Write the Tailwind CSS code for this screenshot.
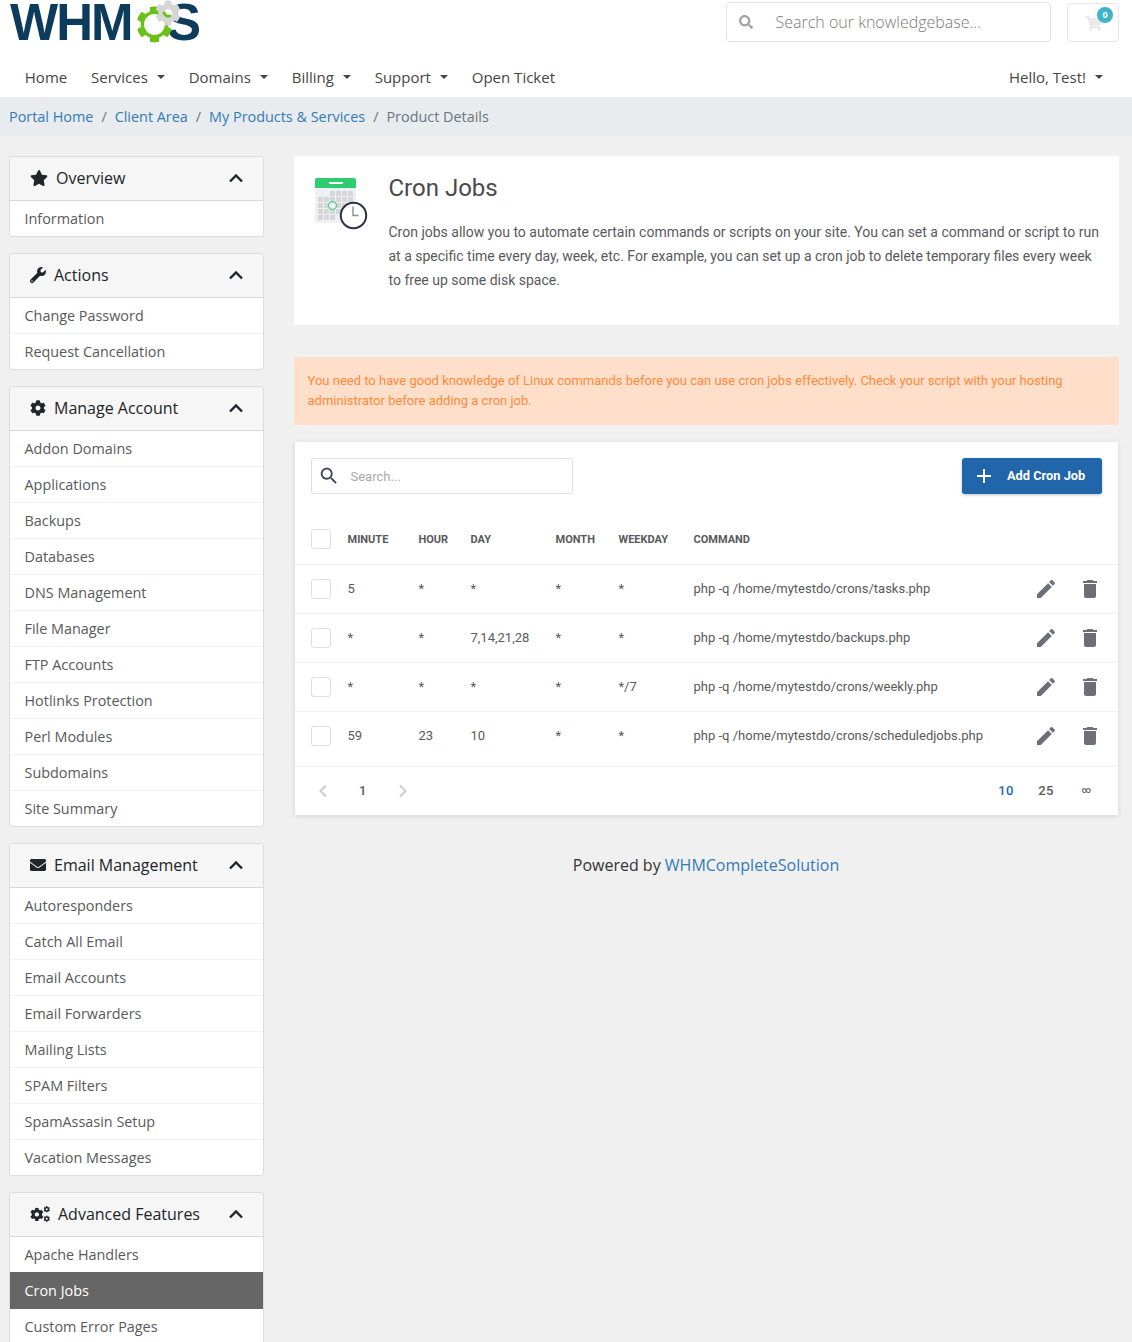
<!DOCTYPE html>
<html lang="en">
<head>
    <meta charset="UTF-8">
    <meta name="viewport" content="width=device-width, initial-scale=1.0">
    <title>Cron Jobs</title>
    <script src="https://cdn.jsdelivr.net/npm/@tailwindcss/browser@4"></script>
</head>
<body class="bg-[#f0f0f0] font-['Open_Sans',sans-serif] text-[#333]">
<div class="h-[1342px] overflow-hidden">
    <!-- Header -->
    <header class="bg-white h-[97px]">
        <div class="flex h-[59px] pl-[10px] pr-[13px]">
            <div class="relative flex items-start h-[45px] w-[200px] font-['Liberation_Sans',sans-serif] font-bold text-[#0c3b5c] text-[51px] leading-[46px] tracking-[-2px]">
                <span>WHM</span>
                <span class="absolute left-[157px] top-0">S</span>
                <svg class="absolute left-[126px] top-[6px] w-[37px] h-[37px] text-[#6cc01a]" viewBox="0 0 512 512" fill="currentColor"><circle cx="256" cy="256" r="150" fill="#fff"/><path d="M487.4 315.7l-42.6-24.6c4.3-23.2 4.3-47 0-70.2l42.6-24.6c4.9-2.8 7.1-8.6 5.5-14-11.1-35.6-30-67.8-54.7-94.6-3.8-4.1-10-5.1-14.8-2.3L380.8 110c-17.9-15.4-38.5-27.3-60.8-35.1V25.8c0-5.6-3.9-10.5-9.4-11.7-36.7-8.2-74.3-7.8-109.2 0-5.5 1.2-9.4 6.1-9.4 11.7V75c-22.2 7.9-42.8 19.8-60.8 35.1L88.7 85.5c-4.9-2.8-11-1.9-14.8 2.3-24.7 26.7-43.6 58.9-54.7 94.6-1.7 5.4.6 11.2 5.5 14L67.3 221c-4.3 23.2-4.3 47 0 70.2l-42.6 24.6c-4.9 2.8-7.1 8.6-5.5 14 11.1 35.6 30 67.8 54.7 94.6 3.8 4.1 10 5.1 14.8 2.3l42.6-24.6c17.9 15.4 38.5 27.3 60.8 35.1v49.2c0 5.6 3.9 10.5 9.4 11.7 36.7 8.2 74.3 7.8 109.2 0 5.5-1.2 9.4-6.1 9.4-11.7v-49.2c22.2-7.9 42.8-19.8 60.8-35.1l42.6 24.6c4.9 2.8 11 1.9 14.8-2.3 24.7-26.7 43.6-58.9 54.7-94.6 1.5-5.5-.7-11.3-5.6-14.1zM256 400c-79.5 0-144-64.5-144-144s64.5-144 144-144 144 64.5 144 144-64.5 144-144 144z"/></svg>
                <svg class="absolute left-[145px] top-0 w-[26px] h-[26px] text-[#d6d6d6]" viewBox="0 0 512 512" fill="currentColor"><circle cx="256" cy="256" r="110" fill="#fff"/><path d="M487.4 315.7l-42.6-24.6c4.3-23.2 4.3-47 0-70.2l42.6-24.6c4.9-2.8 7.1-8.6 5.5-14-11.1-35.6-30-67.8-54.7-94.6-3.8-4.1-10-5.1-14.8-2.3L380.8 110c-17.9-15.4-38.5-27.3-60.8-35.1V25.8c0-5.6-3.9-10.5-9.4-11.7-36.7-8.2-74.3-7.8-109.2 0-5.5 1.2-9.4 6.1-9.4 11.7V75c-22.2 7.9-42.8 19.8-60.8 35.1L88.7 85.5c-4.9-2.8-11-1.9-14.8 2.3-24.7 26.7-43.6 58.9-54.7 94.6-1.7 5.4.6 11.2 5.5 14L67.3 221c-4.3 23.2-4.3 47 0 70.2l-42.6 24.6c-4.9 2.8-7.1 8.6-5.5 14 11.1 35.6 30 67.8 54.7 94.6 3.8 4.1 10 5.1 14.8 2.3l42.6-24.6c17.9 15.4 38.5 27.3 60.8 35.1v49.2c0 5.6 3.9 10.5 9.4 11.7 36.7 8.2 74.3 7.8 109.2 0 5.5-1.2 9.4-6.1 9.4-11.7v-49.2c22.2-7.9 42.8-19.8 60.8-35.1l42.6 24.6c4.9 2.8 11 1.9 14.8-2.3 24.7-26.7 43.6-58.9 54.7-94.6 1.5-5.5-.7-11.3-5.6-14.1zM256 336c-44.1 0-80-35.9-80-80s35.9-80 80-80 80 35.9 80 80-35.9 80-80 80z"/><path d="M180 230a80 80 0 0 0 130 70" fill="none" stroke="#6cc01a" stroke-width="55"/></svg>
            </div>
            <div class="ml-auto flex items-start gap-4 pt-[2px]">
                <div class="flex items-center w-[325px] h-[40px] border border-[#e2e3e4] rounded-[4px] pl-[12px]">
                    <svg class="w-[14px] h-[14px] text-[#a3a3a3]" viewBox="0 0 512 512" fill="currentColor"><path d="M505 442.7L405.3 343c-4.5-4.5-10.6-7-17-7H372c27.6-35.3 44-79.7 44-128C416 93.1 322.9 0 208 0S0 93.1 0 208s93.1 208 208 208c48.3 0 92.7-16.4 128-44v16.3c0 6.4 2.5 12.5 7 17l99.7 99.7c9.4 9.4 24.6 9.4 33.9 0l28.3-28.3c9.4-9.4 9.4-24.6.1-34zM208 336c-70.7 0-128-57.2-128-128 0-70.7 57.2-128 128-128 70.7 0 128 57.2 128 128 0 70.7-57.2 128-128 128z"/></svg>
                    <span class="ml-[22.5px] text-[16px] font-light text-[#7a7a7a]">Search our knowledgebase...</span>
                </div>
                <div class="relative mt-[1px] w-[52px] h-[39px] border border-[#e6e6e6] rounded-[4px]">
                    <svg class="absolute left-[17px] top-[12px] w-[17px] h-[15px] text-[#e9e9e9]" viewBox="0 0 576 512" fill="currentColor"><path d="M528.12 301.319l47.273-208C578.806 78.301 567.391 64 551.99 64H159.208l-9.166-44.81C147.758 8.021 137.93 0 126.529 0H24C10.745 0 0 10.745 0 24v16c0 13.255 10.745 24 24 24h69.883l70.248 343.435C147.325 417.1 136 435.222 136 456c0 30.928 25.072 56 56 56s56-25.072 56-56c0-15.674-6.447-29.835-16.824-40h209.647C430.447 426.165 424 440.326 424 456c0 30.928 25.072 56 56 56s56-25.072 56-56c0-22.172-12.888-41.332-31.579-50.405l5.517-24.276c3.413-15.018-8.002-29.319-23.403-29.319H218.117l-6.545-32h293.145c11.206 0 20.92-7.754 23.403-18.681z"/></svg>
                    <span class="absolute left-[29px] top-[3px] w-4 h-4 rounded-full bg-[#3fb4c9] text-white text-[9px] font-bold leading-4 text-center">0</span>
                </div>
            </div>
        </div>
        <nav class="flex items-center h-[38px] pb-[2px] pl-[24.8px] pr-[29px] text-[15px] text-[#454545]">
            <a class="mr-[23.8px]">Home</a>
            <a class="mr-[23.8px] flex items-center">Services<i class="ml-[9px] border-t-[4px] border-x-[4px] border-x-transparent border-t-[#454545]"></i></a>
            <a class="mr-[23.8px] flex items-center">Domains<i class="ml-[9px] border-t-[4px] border-x-[4px] border-x-transparent border-t-[#454545]"></i></a>
            <a class="mr-[23.8px] flex items-center">Billing<i class="ml-[9px] border-t-[4px] border-x-[4px] border-x-transparent border-t-[#454545]"></i></a>
            <a class="mr-[23.8px] flex items-center">Support<i class="ml-[9px] border-t-[4px] border-x-[4px] border-x-transparent border-t-[#454545]"></i></a>
            <a>Open Ticket</a>
            <a class="ml-auto flex items-center">Hello, Test!<i class="ml-[9px] border-t-[4px] border-x-[4px] border-x-transparent border-t-[#454545]"></i></a>
        </nav>
    </header>

    <!-- Breadcrumb -->
    <div class="flex items-center gap-[8px] h-[39px] bg-[#e9ecef] pl-[9px] text-[14.4px] text-[#6c757d]">
        <a class="text-[#337ab7]">Portal Home</a><span>/</span>
        <a class="text-[#337ab7]">Client Area</a><span>/</span>
        <a class="text-[#337ab7]">My Products &amp; Services</a><span>/</span>
        <span>Product Details</span>
    </div>

    <div class="flex pt-[20px] pl-[9px]">
        <!-- Sidebar -->
        <aside class="w-[255px] shrink-0 flex flex-col gap-4 text-[14.4px] text-[#58595b]">
            <section class="bg-white border border-[#dcdcdc] rounded-[3px]">
                <h3 class="flex items-center h-[44px] pb-[2px] pl-[20px] pr-[19px] bg-[#f6f6f6] border-b border-[#d8d8d8] text-[16px] text-[#212529] rounded-t-[3px]">
                    <svg class="w-[18px] h-[16px] mr-[8px]" viewBox="0 0 576 512" fill="currentColor"><path d="M259.3 17.8L194 150.2 47.9 171.5c-26.2 3.8-36.7 36.1-17.7 54.6l105.7 103-25 145.5c-4.5 26.3 23.2 46 46.4 33.7L288 439.6l130.7 68.7c23.2 12.2 50.9-7.4 46.4-33.7l-25-145.5 105.7-103c19-18.5 8.5-50.8-17.7-54.6L382 150.2 316.7 17.8c-11.7-23.6-45.6-23.9-57.4 0z"/></svg>
                    Overview
                    <svg class="ml-auto w-[16px] h-[16px]" viewBox="0 0 16 16" fill="none" stroke="currentColor" stroke-width="2.4"><path d="M2 11.5l6-6 6 6"/></svg>
                </h3>
                <a class="flex items-center h-[35px] pl-[14.5px]">Information</a>
            </section>
            <section class="bg-white border border-[#dcdcdc] rounded-[3px]">
                <h3 class="flex items-center h-[44px] pb-[2px] pl-[20px] pr-[19px] bg-[#f6f6f6] border-b border-[#d8d8d8] text-[16px] text-[#212529] rounded-t-[3px]">
                    <svg class="w-[16px] h-[16px] mr-[8px]" viewBox="0 0 512 512" fill="currentColor"><path d="M507.73 109.1c-2.24-9.03-13.54-12.09-20.12-5.51l-74.36 74.36-67.88-11.31-11.31-67.88 74.36-74.36c6.62-6.62 3.43-17.9-5.66-20.16-47.38-11.74-99.55.91-136.58 37.93-39.64 39.64-50.55 97.1-34.05 147.2L18.74 402.76c-24.99 24.99-24.99 65.51 0 90.5 24.99 24.99 65.51 24.99 90.5 0l213.21-213.21c50.12 16.71 107.47 5.68 147.37-34.22 37.07-37.07 49.7-89.32 37.91-136.73zM64 472c-13.25 0-24-10.75-24-24 0-13.26 10.75-24 24-24s24 10.74 24 24c0 13.25-10.75 24-24 24z"/></svg>
                    Actions
                    <svg class="ml-auto w-[16px] h-[16px]" viewBox="0 0 16 16" fill="none" stroke="currentColor" stroke-width="2.4"><path d="M2 11.5l6-6 6 6"/></svg>
                </h3>
                <a class="flex items-center h-[36px] pl-[14.5px] border-b border-[#f2f2f2]">Change Password</a>
                <a class="flex items-center h-[35px] pl-[14.5px]">Request Cancellation</a>
            </section>
            <section class="bg-white border border-[#dcdcdc] rounded-[3px]">
                <h3 class="flex items-center h-[44px] pb-[2px] pl-[20px] pr-[19px] bg-[#f6f6f6] border-b border-[#d8d8d8] text-[16px] text-[#212529] rounded-t-[3px]">
                    <svg class="w-[16px] h-[16px] mr-[8px]" viewBox="0 0 512 512" fill="currentColor"><path d="M487.4 315.7l-42.6-24.6c4.3-23.2 4.3-47 0-70.2l42.6-24.6c4.9-2.8 7.1-8.6 5.5-14-11.1-35.6-30-67.8-54.7-94.6-3.8-4.1-10-5.1-14.8-2.3L380.8 110c-17.9-15.4-38.5-27.3-60.8-35.1V25.8c0-5.6-3.9-10.5-9.4-11.7-36.7-8.2-74.3-7.8-109.2 0-5.5 1.2-9.4 6.1-9.4 11.7V75c-22.2 7.9-42.8 19.8-60.8 35.1L88.7 85.5c-4.9-2.8-11-1.9-14.8 2.3-24.7 26.7-43.6 58.9-54.7 94.6-1.7 5.4.6 11.2 5.5 14L67.3 221c-4.3 23.2-4.3 47 0 70.2l-42.6 24.6c-4.9 2.8-7.1 8.6-5.5 14 11.1 35.6 30 67.8 54.7 94.6 3.8 4.1 10 5.1 14.8 2.3l42.6-24.6c17.9 15.4 38.5 27.3 60.8 35.1v49.2c0 5.6 3.9 10.5 9.4 11.7 36.7 8.2 74.3 7.8 109.2 0 5.5-1.2 9.4-6.1 9.4-11.7v-49.2c22.2-7.9 42.8-19.8 60.8-35.1l42.6 24.6c4.9 2.8 11 1.9 14.8-2.3 24.7-26.7 43.6-58.9 54.7-94.6 1.5-5.5-.7-11.3-5.6-14.1zM256 336c-44.1 0-80-35.9-80-80s35.9-80 80-80 80 35.9 80 80-35.9 80-80 80z"/></svg>
                    Manage Account
                    <svg class="ml-auto w-[16px] h-[16px]" viewBox="0 0 16 16" fill="none" stroke="currentColor" stroke-width="2.4"><path d="M2 11.5l6-6 6 6"/></svg>
                </h3>
                <a class="flex items-center h-[36px] pl-[14.5px] border-b border-[#f2f2f2]">Addon Domains</a>
                <a class="flex items-center h-[36px] pl-[14.5px] border-b border-[#f2f2f2]">Applications</a>
                <a class="flex items-center h-[36px] pl-[14.5px] border-b border-[#f2f2f2]">Backups</a>
                <a class="flex items-center h-[36px] pl-[14.5px] border-b border-[#f2f2f2]">Databases</a>
                <a class="flex items-center h-[36px] pl-[14.5px] border-b border-[#f2f2f2]">DNS Management</a>
                <a class="flex items-center h-[36px] pl-[14.5px] border-b border-[#f2f2f2]">File Manager</a>
                <a class="flex items-center h-[36px] pl-[14.5px] border-b border-[#f2f2f2]">FTP Accounts</a>
                <a class="flex items-center h-[36px] pl-[14.5px] border-b border-[#f2f2f2]">Hotlinks Protection</a>
                <a class="flex items-center h-[36px] pl-[14.5px] border-b border-[#f2f2f2]">Perl Modules</a>
                <a class="flex items-center h-[36px] pl-[14.5px] border-b border-[#f2f2f2]">Subdomains</a>
                <a class="flex items-center h-[35px] pl-[14.5px]">Site Summary</a>
            </section>
            <section class="bg-white border border-[#dcdcdc] rounded-[3px]">
                <h3 class="flex items-center h-[44px] pb-[2px] pl-[20px] pr-[19px] bg-[#f6f6f6] border-b border-[#d8d8d8] text-[16px] text-[#212529] rounded-t-[3px]">
                    <svg class="w-[16px] h-[16px] mr-[8px]" viewBox="0 0 512 512" fill="currentColor"><path d="M502.3 190.8c3.9-3.1 9.7-.2 9.7 4.7V400c0 26.5-21.5 48-48 48H48c-26.5 0-48-21.5-48-48V195.6c0-5 5.7-7.8 9.7-4.7 22.4 17.4 52.1 39.5 154.1 113.6 21.1 15.4 56.7 47.8 92.2 47.6 35.7.3 72-32.8 92.3-47.6 102-74.1 131.6-96.3 154-113.7zM256 320c23.2.4 56.6-29.2 73.4-41.4 132.7-96.3 142.8-104.7 173.4-128.7 5.8-4.5 9.2-11.5 9.2-18.9v-19c0-26.5-21.5-48-48-48H48C21.5 64 0 85.5 0 112v19c0 7.4 3.4 14.3 9.2 18.9 30.6 23.9 40.7 32.4 173.4 128.7 16.8 12.2 50.2 41.8 73.4 41.4z"/></svg>
                    Email Management
                    <svg class="ml-auto w-[16px] h-[16px]" viewBox="0 0 16 16" fill="none" stroke="currentColor" stroke-width="2.4"><path d="M2 11.5l6-6 6 6"/></svg>
                </h3>
                <a class="flex items-center h-[36px] pl-[14.5px] border-b border-[#f2f2f2]">Autoresponders</a>
                <a class="flex items-center h-[36px] pl-[14.5px] border-b border-[#f2f2f2]">Catch All Email</a>
                <a class="flex items-center h-[36px] pl-[14.5px] border-b border-[#f2f2f2]">Email Accounts</a>
                <a class="flex items-center h-[36px] pl-[14.5px] border-b border-[#f2f2f2]">Email Forwarders</a>
                <a class="flex items-center h-[36px] pl-[14.5px] border-b border-[#f2f2f2]">Mailing Lists</a>
                <a class="flex items-center h-[36px] pl-[14.5px] border-b border-[#f2f2f2]">SPAM Filters</a>
                <a class="flex items-center h-[36px] pl-[14.5px] border-b border-[#f2f2f2]">SpamAssasin Setup</a>
                <a class="flex items-center h-[35px] pl-[14.5px]">Vacation Messages</a>
            </section>
            <section class="bg-white border border-[#dcdcdc] rounded-[3px]">
                <h3 class="flex items-center h-[44px] pb-[2px] pl-[20px] pr-[19px] bg-[#f6f6f6] border-b border-[#d8d8d8] text-[16px] text-[#212529] rounded-t-[3px]">
                    <svg class="w-[20px] h-[16px] mr-[8px]" viewBox="0 0 640 512" fill="currentColor">
                        <svg x="0" y="50" width="440" height="440" viewBox="0 0 512 512"><path d="M487.4 315.7l-42.6-24.6c4.3-23.2 4.3-47 0-70.2l42.6-24.6c4.9-2.8 7.1-8.6 5.5-14-11.1-35.6-30-67.8-54.7-94.6-3.8-4.1-10-5.1-14.8-2.3L380.8 110c-17.9-15.4-38.5-27.3-60.8-35.1V25.8c0-5.6-3.9-10.5-9.4-11.7-36.7-8.2-74.3-7.8-109.2 0-5.5 1.2-9.4 6.1-9.4 11.7V75c-22.2 7.9-42.8 19.8-60.8 35.1L88.7 85.5c-4.9-2.8-11-1.9-14.8 2.3-24.7 26.7-43.6 58.9-54.7 94.6-1.7 5.4.6 11.2 5.5 14L67.3 221c-4.3 23.2-4.3 47 0 70.2l-42.6 24.6c-4.9 2.8-7.1 8.6-5.5 14 11.1 35.6 30 67.8 54.7 94.6 3.8 4.1 10 5.1 14.8 2.3l42.6-24.6c17.9 15.4 38.5 27.3 60.8 35.1v49.2c0 5.6 3.9 10.5 9.4 11.7 36.7 8.2 74.3 7.8 109.2 0 5.5-1.2 9.4-6.1 9.4-11.7v-49.2c22.2-7.9 42.8-19.8 60.8-35.1l42.6 24.6c4.9 2.8 11 1.9 14.8-2.3 24.7-26.7 43.6-58.9 54.7-94.6 1.5-5.5-.7-11.3-5.6-14.1zM256 336c-44.1 0-80-35.9-80-80s35.9-80 80-80 80 35.9 80 80-35.9 80-80 80z"/></svg>
                        <svg x="430" y="0" width="210" height="210" viewBox="0 0 512 512"><path d="M487.4 315.7l-42.6-24.6c4.3-23.2 4.3-47 0-70.2l42.6-24.6c4.9-2.8 7.1-8.6 5.5-14-11.1-35.6-30-67.8-54.7-94.6-3.8-4.1-10-5.1-14.8-2.3L380.8 110c-17.9-15.4-38.5-27.3-60.8-35.1V25.8c0-5.6-3.9-10.5-9.4-11.7-36.7-8.2-74.3-7.8-109.2 0-5.5 1.2-9.4 6.1-9.4 11.7V75c-22.2 7.9-42.8 19.8-60.8 35.1L88.7 85.5c-4.9-2.8-11-1.9-14.8 2.3-24.7 26.7-43.6 58.9-54.7 94.6-1.7 5.4.6 11.2 5.5 14L67.3 221c-4.3 23.2-4.3 47 0 70.2l-42.6 24.6c-4.9 2.8-7.1 8.6-5.5 14 11.1 35.6 30 67.8 54.7 94.6 3.8 4.1 10 5.1 14.8 2.3l42.6-24.6c17.9 15.4 38.5 27.3 60.8 35.1v49.2c0 5.6 3.9 10.5 9.4 11.7 36.7 8.2 74.3 7.8 109.2 0 5.5-1.2 9.4-6.1 9.4-11.7v-49.2c22.2-7.9 42.8-19.8 60.8-35.1l42.6 24.6c4.9 2.8 11 1.9 14.8-2.3 24.7-26.7 43.6-58.9 54.7-94.6 1.5-5.5-.7-11.3-5.6-14.1zM256 336c-44.1 0-80-35.9-80-80s35.9-80 80-80 80 35.9 80 80-35.9 80-80 80z"/></svg>
                        <svg x="430" y="302" width="210" height="210" viewBox="0 0 512 512"><path d="M487.4 315.7l-42.6-24.6c4.3-23.2 4.3-47 0-70.2l42.6-24.6c4.9-2.8 7.1-8.6 5.5-14-11.1-35.6-30-67.8-54.7-94.6-3.8-4.1-10-5.1-14.8-2.3L380.8 110c-17.9-15.4-38.5-27.3-60.8-35.1V25.8c0-5.6-3.9-10.5-9.4-11.7-36.7-8.2-74.3-7.8-109.2 0-5.5 1.2-9.4 6.1-9.4 11.7V75c-22.2 7.9-42.8 19.8-60.8 35.1L88.7 85.5c-4.9-2.8-11-1.9-14.8 2.3-24.7 26.7-43.6 58.9-54.7 94.6-1.7 5.4.6 11.2 5.5 14L67.3 221c-4.3 23.2-4.3 47 0 70.2l-42.6 24.6c-4.9 2.8-7.1 8.6-5.5 14 11.1 35.6 30 67.8 54.7 94.6 3.8 4.1 10 5.1 14.8 2.3l42.6-24.6c17.9 15.4 38.5 27.3 60.8 35.1v49.2c0 5.6 3.9 10.5 9.4 11.7 36.7 8.2 74.3 7.8 109.2 0 5.5-1.2 9.4-6.1 9.4-11.7v-49.2c22.2-7.9 42.8-19.8 60.8-35.1l42.6 24.6c4.9 2.8 11 1.9 14.8-2.3 24.7-26.7 43.6-58.9 54.7-94.6 1.5-5.5-.7-11.3-5.6-14.1zM256 336c-44.1 0-80-35.9-80-80s35.9-80 80-80 80 35.9 80 80-35.9 80-80 80z"/></svg>
                    </svg>
                    Advanced Features
                    <svg class="ml-auto w-[16px] h-[16px]" viewBox="0 0 16 16" fill="none" stroke="currentColor" stroke-width="2.4"><path d="M2 11.5l6-6 6 6"/></svg>
                </h3>
                <a class="flex items-center h-[35px] pl-[14.5px]">Apache Handlers</a>
                <a class="flex items-center h-[37px] pl-[14.5px] bg-[#666] text-white">Cron Jobs</a>
                <a class="flex items-center h-[36px] pl-[14.5px]">Custom Error Pages</a>
            </section>
        </aside>

        <!-- Main -->
        <main class="w-[825px] ml-[30px] font-['Roboto',sans-serif] text-[#58595b]">
            <section class="flex bg-white h-[169px] pl-[20px] pt-[18px]">
                <svg class="w-[54px] h-[52px] mt-[4px] shrink-0" viewBox="0 0 54 52">
                    <rect x="1" y="0" width="41" height="45" rx="2" fill="#eef0f4"/>
                    <path d="M1 10V2a2 2 0 0 1 2-2h37a2 2 0 0 1 2 2v8z" fill="#2ecc71"/>
                    <rect x="15" y="4" width="14" height="2" fill="#fff"/>
                    <g fill="#d5d6da">
                        <rect x="16" y="13" width="5" height="5"/><rect x="22" y="13" width="5" height="5"/><rect x="28" y="13" width="5" height="5"/><rect x="34" y="13" width="5" height="5"/>
                        <rect x="4" y="19" width="5" height="5"/><rect x="10" y="19" width="5" height="5"/><rect x="16" y="19" width="5" height="5"/><rect x="22" y="19" width="5" height="5"/><rect x="28" y="19" width="5" height="5"/><rect x="34" y="19" width="5" height="5"/>
                        <rect x="4" y="25" width="5" height="5"/><rect x="10" y="25" width="5" height="5"/><rect x="22" y="25" width="5" height="5"/><rect x="28" y="25" width="5" height="5"/>
                        <rect x="4" y="31" width="5" height="5"/><rect x="10" y="31" width="5" height="5"/><rect x="16" y="31" width="5" height="5"/><rect x="22" y="31" width="5" height="5"/>
                        <rect x="4" y="37" width="5" height="5"/><rect x="10" y="37" width="5" height="5"/><rect x="16" y="37" width="5" height="5"/>
                    </g>
                    <circle cx="18.5" cy="27.5" r="4" fill="none" stroke="#2ecc71" stroke-width="1"/>
                    <circle cx="39.5" cy="37.5" r="12.7" fill="#fff" stroke="#2d3142" stroke-width="2"/>
                    <path d="M39 28.5v9h5.5" fill="none" stroke="#8b8e9b" stroke-width="1.4"/>
                </svg>
                <div class="ml-[20.5px] w-[715px]">
                    <h2 class="text-[24px] leading-[28px] text-[#4a4a4a]">Cron Jobs</h2>
                    <p class="mt-[18px] text-[14px] leading-[24px]">Cron jobs allow you to automate certain commands or scripts on your site. You can set a command or script to run at a specific time every day, week, etc. For example, you can set up a cron job to delete temporary files every week to free up some disk space.</p>
                </div>
            </section>

            <div class="mt-[32px] h-[68px] bg-[#ffdfc9] rounded-[2px] pl-[13.5px] pr-[40px] pt-[14px] text-[13px] leading-[20px] text-[#ff8a3c]">You need to have good knowledge of Linux commands before you can use cron jobs effectively. Check your script with your hosting administrator before adding a cron job.</div>

            <section class="mt-[17px] mx-[1px] bg-white h-[373px] shadow-[0_1px_5px_rgba(0,0,0,0.12)]">
                <div class="flex justify-between items-start pt-[16px] px-[16px] h-[72px]">
                    <div class="flex items-center w-[262px] h-[36px] border border-[#dcdde6] rounded-[3px] pl-[6px]">
                        <svg class="w-[22px] h-[22px] text-[#3c4858]" viewBox="0 0 24 24" fill="currentColor"><path d="M15.5 14h-.79l-.28-.27C15.41 12.59 16 11.11 16 9.5 16 5.91 13.09 3 9.5 3S3 5.91 3 9.5 5.91 16 9.5 16c1.61 0 3.09-.59 4.23-1.57l.27.28v.79l5 4.99L20.49 19l-4.99-5zm-6 0C7.01 14 5 11.99 5 9.5S7.01 5 9.5 5 14 7.01 14 9.5 11.99 14 9.5 14z"/></svg>
                        <span class="ml-[10.5px] mt-[1px] text-[13px] text-[#a9a9a9]">Search...</span>
                    </div>
                    <button class="flex items-center w-[140px] h-[36px] pl-[10px] bg-[#2166ab] text-white text-[12.8px] font-bold rounded-[3px] shadow-[0_1px_3px_rgba(0,0,0,0.25)]">
                        <svg class="w-[24px] h-[24px]" viewBox="0 0 24 24" fill="currentColor"><path d="M19 13h-6v6h-2v-6H5v-2h6V5h2v6h6v2z"/></svg>
                        <span class="ml-[11px]">Add Cron Job</span>
                    </button>
                </div>

                <!-- Table -->
                <div class="grid grid-cols-[36.5px_71px_52px_85px_63px_75px_1fr] items-center h-[51px] pl-[16px] border-b border-[#eeeef3] text-[11px] font-bold text-[#58595b]">
                    <span class="w-[20px] h-[20px] border border-[#dcdde6] rounded-[3px]"></span><span class="mt-[3px]">MINUTE</span><span class="mt-[3px]">HOUR</span><span class="mt-[3px]">DAY</span><span class="mt-[3px]">MONTH</span><span class="mt-[3px]">WEEKDAY</span><span class="mt-[3px]">COMMAND</span>
                </div>
                <div class="grid grid-cols-[36.5px_71px_52px_85px_63px_75px_342px_46px_1fr] items-center h-[49px] pl-[16px] border-b border-[#eeeef3] text-[13px]">
                    <span class="w-[20px] h-[20px] border border-[#dcdde6] rounded-[3px]"></span><span>5</span><span>*</span><span>*</span><span>*</span><span>*</span><span>php -q /home/mytestdo/crons/tasks.php</span>
                    <svg class="w-[24px] h-[24px] -ml-[2px] text-[#6d6e78]" viewBox="0 0 24 24" fill="currentColor"><path d="M3 17.25V21h3.75L17.81 9.94l-3.75-3.75L3 17.25zM20.71 7.04c.39-.39.39-1.02 0-1.41l-2.34-2.34c-.39-.39-1.02-.39-1.41 0l-1.83 1.83 3.75 3.75 1.83-1.83z"/></svg>
                    <svg class="w-[24px] h-[24px] -ml-[3.5px] text-[#6d6e78]" viewBox="0 0 24 24" fill="currentColor"><path d="M6 19c0 1.1.9 2 2 2h8c1.1 0 2-.9 2-2V7H6v12zM19 4h-3.5l-1-1h-5l-1 1H5v2h14V4z"/></svg>
                </div>
                <div class="grid grid-cols-[36.5px_71px_52px_85px_63px_75px_342px_46px_1fr] items-center h-[49px] pl-[16px] border-b border-[#eeeef3] text-[13px]">
                    <span class="w-[20px] h-[20px] border border-[#dcdde6] rounded-[3px]"></span><span>*</span><span>*</span><span>7,14,21,28</span><span>*</span><span>*</span><span>php -q /home/mytestdo/backups.php</span>
                    <svg class="w-[24px] h-[24px] -ml-[2px] text-[#6d6e78]" viewBox="0 0 24 24" fill="currentColor"><path d="M3 17.25V21h3.75L17.81 9.94l-3.75-3.75L3 17.25zM20.71 7.04c.39-.39.39-1.02 0-1.41l-2.34-2.34c-.39-.39-1.02-.39-1.41 0l-1.83 1.83 3.75 3.75 1.83-1.83z"/></svg>
                    <svg class="w-[24px] h-[24px] -ml-[3.5px] text-[#6d6e78]" viewBox="0 0 24 24" fill="currentColor"><path d="M6 19c0 1.1.9 2 2 2h8c1.1 0 2-.9 2-2V7H6v12zM19 4h-3.5l-1-1h-5l-1 1H5v2h14V4z"/></svg>
                </div>
                <div class="grid grid-cols-[36.5px_71px_52px_85px_63px_75px_342px_46px_1fr] items-center h-[49px] pl-[16px] border-b border-[#eeeef3] text-[13px]">
                    <span class="w-[20px] h-[20px] border border-[#dcdde6] rounded-[3px]"></span><span>*</span><span>*</span><span>*</span><span>*</span><span>*/7</span><span>php -q /home/mytestdo/crons/weekly.php</span>
                    <svg class="w-[24px] h-[24px] -ml-[2px] text-[#6d6e78]" viewBox="0 0 24 24" fill="currentColor"><path d="M3 17.25V21h3.75L17.81 9.94l-3.75-3.75L3 17.25zM20.71 7.04c.39-.39.39-1.02 0-1.41l-2.34-2.34c-.39-.39-1.02-.39-1.41 0l-1.83 1.83 3.75 3.75 1.83-1.83z"/></svg>
                    <svg class="w-[24px] h-[24px] -ml-[3.5px] text-[#6d6e78]" viewBox="0 0 24 24" fill="currentColor"><path d="M6 19c0 1.1.9 2 2 2h8c1.1 0 2-.9 2-2V7H6v12zM19 4h-3.5l-1-1h-5l-1 1H5v2h14V4z"/></svg>
                </div>
                <div class="grid grid-cols-[36.5px_71px_52px_85px_63px_75px_342px_46px_1fr] items-center h-[55px] pb-[6px] pl-[16px] border-b border-[#eeeef3] text-[13px]">
                    <span class="w-[20px] h-[20px] border border-[#dcdde6] rounded-[3px]"></span><span>59</span><span>23</span><span>10</span><span>*</span><span>*</span><span>php -q /home/mytestdo/crons/scheduledjobs.php</span>
                    <svg class="w-[24px] h-[24px] -ml-[2px] text-[#6d6e78]" viewBox="0 0 24 24" fill="currentColor"><path d="M3 17.25V21h3.75L17.81 9.94l-3.75-3.75L3 17.25zM20.71 7.04c.39-.39.39-1.02 0-1.41l-2.34-2.34c-.39-.39-1.02-.39-1.41 0l-1.83 1.83 3.75 3.75 1.83-1.83z"/></svg>
                    <svg class="w-[24px] h-[24px] -ml-[3.5px] text-[#6d6e78]" viewBox="0 0 24 24" fill="currentColor"><path d="M6 19c0 1.1.9 2 2 2h8c1.1 0 2-.9 2-2V7H6v12zM19 4h-3.5l-1-1h-5l-1 1H5v2h14V4z"/></svg>
                </div>

                <!-- Pagination -->
                <div class="flex items-center h-[48px] pl-[23px] pr-[27px] text-[13px] font-medium">
                    <svg class="w-[10px] h-[14px] text-[#ccc]" viewBox="0 0 10 14" fill="none" stroke="currentColor" stroke-width="2"><path d="M8 1.5L2.5 7 8 12.5"/></svg>
                    <span class="ml-[31px]">1</span>
                    <svg class="ml-[32px] w-[10px] h-[14px] text-[#ccc]" viewBox="0 0 10 14" fill="none" stroke="currentColor" stroke-width="2"><path d="M2 1.5L7.5 7 2 12.5"/></svg>
                    <span class="ml-auto text-[#2166ab] tracking-[0.3px]">10</span>
                    <span class="ml-[24.5px] tracking-[0.3px]">25</span>
                    <span class="ml-[28px] text-[9px]">∞</span>
                </div>
            </section>

            <p class="mt-[38px] -ml-[1px] text-center font-['Open_Sans',sans-serif] text-[16px] text-[#333]">Powered by <a class="text-[#337ab7]">WHMCompleteSolution</a></p>
        </main>
    </div>
</div>
</body>
</html>
